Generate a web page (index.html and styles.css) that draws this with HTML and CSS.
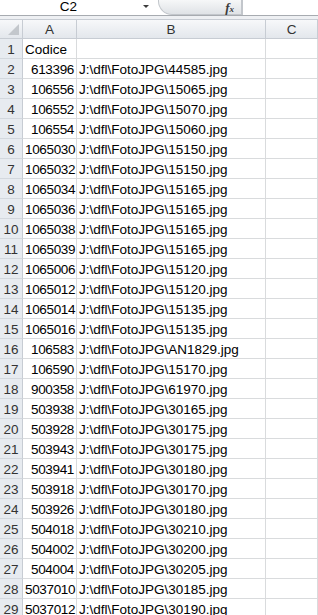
FILE: index.html
```html
<!DOCTYPE html>
<html lang="it">
<head>
    <meta charset="UTF-8">
    <meta name="viewport" content="width=device-width, initial-scale=1.0">
    <title>Foglio1</title>
    <link rel="stylesheet" href="styles.css">
</head>
<body>
    <div class="formula-bar">
        <div class="name-box">C2</div>
        <div class="name-arrow"></div>
        <div class="fx-group"><span class="fx">f<sub>x</sub></span></div>
        <div class="formula-input"></div>
    </div>
    <div class="bar-gap"></div>

    <div class="sheet">
        <div class="corner"></div>
        <div class="col-head">A</div>
        <div class="col-head">B</div>
        <div class="col-head">C</div>

        <div class="row-head">1</div><div class="cell">Codice</div><div class="cell"></div><div class="cell"></div>
        <div class="row-head">2</div><div class="cell num">613396</div><div class="cell">J:\dfl\FotoJPG\44585.jpg</div><div class="cell"></div>
        <div class="row-head">3</div><div class="cell num">106556</div><div class="cell">J:\dfl\FotoJPG\15065.jpg</div><div class="cell"></div>
        <div class="row-head">4</div><div class="cell num">106552</div><div class="cell">J:\dfl\FotoJPG\15070.jpg</div><div class="cell"></div>
        <div class="row-head">5</div><div class="cell num">106554</div><div class="cell">J:\dfl\FotoJPG\15060.jpg</div><div class="cell"></div>
        <div class="row-head">6</div><div class="cell num">1065030</div><div class="cell">J:\dfl\FotoJPG\15150.jpg</div><div class="cell"></div>
        <div class="row-head">7</div><div class="cell num">1065032</div><div class="cell">J:\dfl\FotoJPG\15150.jpg</div><div class="cell"></div>
        <div class="row-head">8</div><div class="cell num">1065034</div><div class="cell">J:\dfl\FotoJPG\15165.jpg</div><div class="cell"></div>
        <div class="row-head">9</div><div class="cell num">1065036</div><div class="cell">J:\dfl\FotoJPG\15165.jpg</div><div class="cell"></div>
        <div class="row-head">10</div><div class="cell num">1065038</div><div class="cell">J:\dfl\FotoJPG\15165.jpg</div><div class="cell"></div>
        <div class="row-head">11</div><div class="cell num">1065039</div><div class="cell">J:\dfl\FotoJPG\15165.jpg</div><div class="cell"></div>
        <div class="row-head">12</div><div class="cell num">1065006</div><div class="cell">J:\dfl\FotoJPG\15120.jpg</div><div class="cell"></div>
        <div class="row-head">13</div><div class="cell num">1065012</div><div class="cell">J:\dfl\FotoJPG\15120.jpg</div><div class="cell"></div>
        <div class="row-head">14</div><div class="cell num">1065014</div><div class="cell">J:\dfl\FotoJPG\15135.jpg</div><div class="cell"></div>
        <div class="row-head">15</div><div class="cell num">1065016</div><div class="cell">J:\dfl\FotoJPG\15135.jpg</div><div class="cell"></div>
        <div class="row-head">16</div><div class="cell num">106583</div><div class="cell">J:\dfl\FotoJPG\AN1829.jpg</div><div class="cell"></div>
        <div class="row-head">17</div><div class="cell num">106590</div><div class="cell">J:\dfl\FotoJPG\15170.jpg</div><div class="cell"></div>
        <div class="row-head">18</div><div class="cell num">900358</div><div class="cell">J:\dfl\FotoJPG\61970.jpg</div><div class="cell"></div>
        <div class="row-head">19</div><div class="cell num">503938</div><div class="cell">J:\dfl\FotoJPG\30165.jpg</div><div class="cell"></div>
        <div class="row-head">20</div><div class="cell num">503928</div><div class="cell">J:\dfl\FotoJPG\30175.jpg</div><div class="cell"></div>
        <div class="row-head">21</div><div class="cell num">503943</div><div class="cell">J:\dfl\FotoJPG\30175.jpg</div><div class="cell"></div>
        <div class="row-head">22</div><div class="cell num">503941</div><div class="cell">J:\dfl\FotoJPG\30180.jpg</div><div class="cell"></div>
        <div class="row-head">23</div><div class="cell num">503918</div><div class="cell">J:\dfl\FotoJPG\30170.jpg</div><div class="cell"></div>
        <div class="row-head">24</div><div class="cell num">503926</div><div class="cell">J:\dfl\FotoJPG\30180.jpg</div><div class="cell"></div>
        <div class="row-head">25</div><div class="cell num">504018</div><div class="cell">J:\dfl\FotoJPG\30210.jpg</div><div class="cell"></div>
        <div class="row-head">26</div><div class="cell num">504002</div><div class="cell">J:\dfl\FotoJPG\30200.jpg</div><div class="cell"></div>
        <div class="row-head">27</div><div class="cell num">504004</div><div class="cell">J:\dfl\FotoJPG\30205.jpg</div><div class="cell"></div>
        <div class="row-head">28</div><div class="cell num">5037010</div><div class="cell">J:\dfl\FotoJPG\30185.jpg</div><div class="cell"></div>
        <div class="row-head">29</div><div class="cell num">5037012</div><div class="cell">J:\dfl\FotoJPG\30190.jpg</div><div class="cell"></div>
    </div>
</body>
</html>
```

FILE: styles.css
```css
body {
    margin: 0;
    background-color: #fff;
    font-family: "Liberation Sans", Arial, sans-serif;
    font-size: 13.5px;
    color: #000;
    overflow: hidden;
}
.formula-bar {
    display: flex;
    height: 15px;
    border-bottom: 1px solid #a7abb0;
    background-color: #fff;
}
.name-box {
    width: 137px;
    text-align: center;
    line-height: 14px;
    font-size: 13.5px;
}
.name-arrow {
    width: 0;
    height: 0;
    margin: 5px 6px 0 6px;
    border-left: 3px solid transparent;
    border-right: 3px solid transparent;
    border-top: 3px solid #3c3c3c;
}
.fx-group {
    width: 84px;
    margin-left: 3px;
    border: 1px solid #c2c6cb;
    border-top: none;
    border-radius: 0 0 0 14px;
    background: linear-gradient(#f6f7f8, #dfe2e6);
    text-align: right;
    padding-right: 7px;
    box-sizing: border-box;
}
.fx {
    font-family: "Liberation Serif", serif;
    font-style: italic;
    font-weight: bold;
    font-size: 13px;
    color: #3a3a3a;
    line-height: 12px;
}
.fx sub {
    font-size: 9px;
    vertical-align: 0;
}
.formula-input {
    flex: 1;
    border-left: 1px solid #c2c6cb;
}
.bar-gap {
    height: 3px;
    background-color: #eef0f3;
}
.sheet {
    display: grid;
    grid-template-columns: 23px 54px 189px 1fr;
    grid-auto-rows: 20px;
}
.corner,
.col-head {
    background: linear-gradient(#f7f8fa, #e3e7ec);
    border-top: 1px solid #c7ccd3;
    border-right: 1px solid #c7ccd3;
    border-bottom: 1px solid #c7ccd3;
    box-sizing: border-box;
}
.corner {
    position: relative;
}
.corner::after {
    content: "";
    position: absolute;
    right: 3px;
    bottom: 3px;
    width: 0;
    height: 0;
    border-left: 11px solid transparent;
    border-bottom: 11px solid #c3c7cc;
}
.col-head {
    text-align: center;
    line-height: 19px;
    color: #333;
}
.row-head {
    background-color: #e7ebf0;
    border-right: 1px solid #c7ccd3;
    border-bottom: 1px solid #d3d8de;
    box-sizing: border-box;
    text-align: center;
    line-height: 21px;
    color: #333;
}
.cell {
    border-right: 1px solid #d9dbdd;
    border-bottom: 1px solid #d9dbdd;
    box-sizing: border-box;
    line-height: 21px;
    padding: 0 2px;
    white-space: nowrap;
    overflow: visible;
}
.num {
    text-align: right;
    letter-spacing: -0.35px;
}
```
